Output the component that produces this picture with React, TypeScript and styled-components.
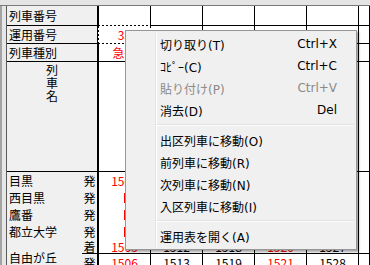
import styled, { createGlobalStyle } from "styled-components";

const GlobalStyle = createGlobalStyle`
  *, *::before, *::after { box-sizing: border-box; }
  html, body { margin: 0; padding: 0; background: #fff; }
  body { width: 370px; height: 265px; overflow: hidden; }
`;

const Screen = styled.div`
  position: relative;
  width: 370px;
  height: 265px;
  overflow: hidden;
  display: flex;
  flex-direction: column;
  background: #fff;
`;

const TopBand = styled.div`
  flex: none;
  height: 6px;
  background: #e4e4e4;
  border-bottom: 1px solid #7a7a7a;
`;

const Body = styled.div`
  flex: 1;
  display: flex;
  min-height: 0;
`;

const LeftStrip = styled.div`
  flex: none;
  width: 7px;
  background: linear-gradient(90deg, #a3a3a3 0 2px, #e6e6e6 2px 6px, #5a5a5a 6px 7px);
`;

const Sheet = styled.div`
  flex: 1;
  display: grid;
  grid-template-columns: 75px 17px repeat(5, 52px) 1fr;
  grid-template-rows: 20px 18px 18px 110px 17px 17px 17px 17px 14px 17px;
  font-family: "Noto Sans CJK JP", sans-serif;
  font-size: 12px;
  color: #000;
`;

const RowLabel = styled.div`
  grid-column: 1 / 3;
  display: flex;
  align-items: center;
  padding-left: 2px;
  background: #f0f0f0;
  border-right: 2px solid #000;
  border-bottom: 1px solid #000;
  line-height: 1;
`;

const VerticalLabel = styled(RowLabel)`
  flex-direction: column;
  align-items: center;
  padding: 1px 0 0;
  line-height: 13px;
`;

const StationName = styled.div<{ $rows?: number }>`
  grid-column: 1;
  grid-row: span ${(p) => p.$rows ?? 1};
  display: flex;
  align-items: center;
  padding: ${(p) => (p.$rows === 2 ? "5px 0 0 2px" : "1px 0 0 2px")};
  background: #f0f0f0;
  line-height: 1;
`;

const DirCell = styled.div<{ $line?: boolean }>`
  grid-column: 2;
  display: flex;
  align-items: center;
  justify-content: center;
  padding-top: 1px;
  background: #f0f0f0;
  border-right: 2px solid #000;
  border-bottom: ${(p) => (p.$line ? "1px solid #000" : "none")};
  line-height: 1;
`;

const DataCell = styled.div<{ $line?: boolean; $red?: boolean; $focus?: boolean }>`
  position: relative;
  display: flex;
  align-items: center;
  justify-content: center;
  padding-top: 1px;
  color: ${(p) => (p.$red ? "#ff0000" : "#000")};
  border-right: 1px solid #000;
  border-bottom: ${(p) => (p.$line ? "1px solid #000" : "none")};
  line-height: 1;
  white-space: nowrap;

  ${(p) =>
    p.$focus &&
    `
    &::after {
      content: "";
      position: absolute;
      top: -1px;
      left: -1px;
      right: -1px;
      bottom: -1px;
      background:
        repeating-linear-gradient(90deg, #000 0 2px, #fff 2px 4px) top / 100% 1px no-repeat,
        repeating-linear-gradient(90deg, #000 0 2px, #fff 2px 4px) bottom / 100% 1px no-repeat,
        repeating-linear-gradient(0deg, #000 0 2px, #fff 2px 4px) left / 1px 100% no-repeat,
        repeating-linear-gradient(0deg, #000 0 2px, #fff 2px 4px) right / 1px 100% no-repeat;
    }
  `}
`;

const PassMark = styled.span`
  display: block;
  width: 2px;
  height: 10px;
  background: #ff0000;
`;

const Menu = styled.div`
  position: absolute;
  left: 125px;
  top: 30px;
  width: 232px;
  padding: 2px 0;
  background: #f0f0f0;
  border: 1px solid #979797;
  box-shadow: 2px 2px 2px rgba(0, 0, 0, 0.35);
  font-family: "DejaVu Sans", "Noto Sans CJK JP", sans-serif;
  font-size: 12px;

  &::before {
    content: "";
    position: absolute;
    top: 2px;
    bottom: 2px;
    left: 29px;
    width: 1px;
    background: #e2e3e3;
    box-shadow: 1px 0 0 #fff;
  }
`;

const MenuItem = styled.div<{ $disabled?: boolean }>`
  position: relative;
  height: 22px;
  display: flex;
  align-items: center;
  justify-content: space-between;
  padding: 0 19px 0 34px;
  color: ${(p) => (p.$disabled ? "#8a8a8a" : "#000")};
  white-space: nowrap;
`;

const Separator = styled.div`
  position: relative;
  height: 2px;
  margin: 3px 2px 3px 31px;
  border-top: 1px solid #e0e0e0;
  border-bottom: 1px solid #fff;
`;

type Cell = { text?: string; pass?: boolean };

const redCols = [true, false, false, true, false];

// cells hidden under the context menu are left empty
const stations: { name: string; rows: { dir: string; cells: Cell[]; line?: boolean }[] }[] = [
  { name: "目黒", rows: [{ dir: "発", cells: [{ text: "1500" }, {}, {}, {}, {}] }] },
  { name: "西目黒", rows: [{ dir: "発", cells: [{ pass: true }, {}, {}, {}, {}] }] },
  { name: "鷹番", rows: [{ dir: "発", cells: [{ pass: true }, {}, {}, {}, {}] }] },
  { name: "都立大学", rows: [{ dir: "発", cells: [{ pass: true }, {}, {}, {}, {}] }] },
  {
    name: "自由が丘",
    rows: [
      { dir: "着", line: true, cells: [{ text: "1505" }, { text: "1512" }, { text: "1518" }, { text: "1520" }, { text: "1527" }] },
      { dir: "発", cells: [{ text: "1506" }, { text: "1513" }, { text: "1519" }, { text: "1521" }, { text: "1528" }] },
    ],
  },
];

const unyo = ["35", "36", "37", "38", "39"];

function DataRow({ cells, line, focusFirst }: { cells: Cell[]; line?: boolean; focusFirst?: boolean }) {
  return (
    <>
      {cells.map((c, i) => (
        <DataCell key={i} $line={line} $red={redCols[i]} $focus={focusFirst && i === 0}>
          {c.pass ? <PassMark /> : c.text}
        </DataCell>
      ))}
      <DataCell $line={line} />
    </>
  );
}

const menuTop = [
  { label: "切り取り(T)", key: "Ctrl+X" },
  { label: "ｺﾋﾟｰ(C)", key: "Ctrl+C" },
  { label: "貼り付け(P)", key: "Ctrl+V", disabled: true },
  { label: "消去(D)", key: "Del" },
];

const menuMove = ["出区列車に移動(O)", "前列車に移動(R)", "次列車に移動(N)", "入区列車に移動(I)"];

export default function App() {
  return (
    <>
      <GlobalStyle />
      <Screen>
        <TopBand />
        <Body>
          <LeftStrip />
          <Sheet>
            <RowLabel>列車番号</RowLabel>
            <DataRow line cells={[{}, {}, {}, {}, {}]} />

            <RowLabel>運用番号</RowLabel>
            <DataRow line focusFirst cells={unyo.map((t) => ({ text: t }))} />

            <RowLabel>列車種別</RowLabel>
            <DataRow line cells={[{ text: "急行" }, {}, {}, {}, {}]} />

            <VerticalLabel>
              <span>列</span>
              <span>車</span>
              <span>名</span>
            </VerticalLabel>
            <DataRow line cells={[{}, {}, {}, {}, {}]} />

            {stations.map((s) => (
              <>
                <StationName key={s.name} $rows={s.rows.length}>
                  {s.name}
                </StationName>
                {s.rows.map((r, ri) => (
                  <>
                    <DirCell key={`${s.name}-${ri}`} $line={r.line}>
                      {r.dir}
                    </DirCell>
                    <DataRow line={r.line} cells={r.cells} />
                  </>
                ))}
              </>
            ))}
          </Sheet>
        </Body>

        <Menu>
          {menuTop.map((m) => (
            <MenuItem key={m.label} $disabled={m.disabled}>
              <span>{m.label}</span>
              <span>{m.key}</span>
            </MenuItem>
          ))}
          <Separator />
          {menuMove.map((m) => (
            <MenuItem key={m}>
              <span>{m}</span>
            </MenuItem>
          ))}
          <Separator />
          <MenuItem>
            <span>運用表を開く(A)</span>
          </MenuItem>
        </Menu>
      </Screen>
    </>
  );
}
